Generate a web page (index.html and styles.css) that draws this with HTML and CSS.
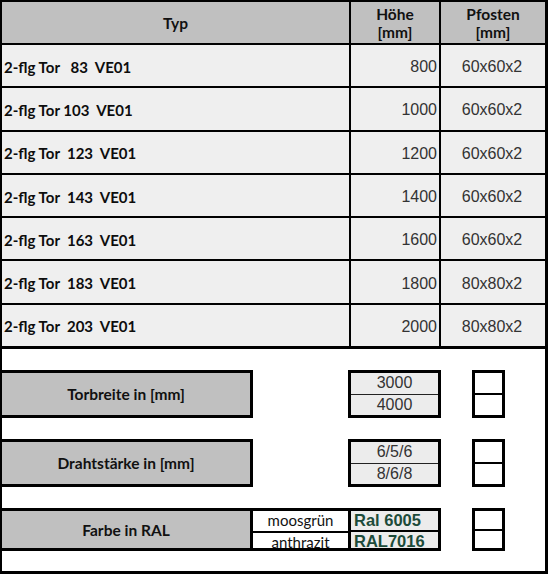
FILE: index.html
```html
<!DOCTYPE html>
<html lang="de">
<head>
<meta charset="utf-8">
<title>Tor Auswahl</title>
<link rel="stylesheet" href="styles.css">
</head>
<body>
<div class="sheet">
  <div class="grid">
    <div class="h">Typ</div>
    <div class="h">Höhe<br>[mm]</div>
    <div class="h">Pfosten<br>[mm]</div>

    <div class="c typ">2-flg Tor &nbsp;&nbsp;83 &nbsp;VE01</div><div class="c num">800</div><div class="c dim">60x60x2</div>
    <div class="c typ">2-flg Tor 103 &nbsp;VE01</div><div class="c num">1000</div><div class="c dim">60x60x2</div>
    <div class="c typ">2-flg Tor &nbsp;123 &nbsp;VE01</div><div class="c num">1200</div><div class="c dim">60x60x2</div>
    <div class="c typ">2-flg Tor &nbsp;143 &nbsp;VE01</div><div class="c num">1400</div><div class="c dim">60x60x2</div>
    <div class="c typ">2-flg Tor &nbsp;163 &nbsp;VE01</div><div class="c num">1600</div><div class="c dim">60x60x2</div>
    <div class="c typ">2-flg Tor &nbsp;183 &nbsp;VE01</div><div class="c num">1800</div><div class="c dim">80x80x2</div>
    <div class="c typ">2-flg Tor &nbsp;203 &nbsp;VE01</div><div class="c num">2000</div><div class="c dim">80x80x2</div>
  </div>

  <div class="lower">
    <div class="opt">
      <div class="label">Torbreite in [mm]</div>
      <div class="vals"><div>3000</div><div>4000</div></div>
      <div class="check"><div></div><div></div></div>
    </div>
    <div class="opt">
      <div class="label">Drahtstärke in [mm]</div>
      <div class="vals"><div>6/5/6</div><div>8/6/8</div></div>
      <div class="check"><div></div><div></div></div>
    </div>
    <div class="opt farbe">
      <div class="label">Farbe in RAL</div>
      <div class="names"><div>moosgrün</div><div>anthrazit</div></div>
      <div class="ral"><div>Ral 6005</div><div>RAL7016</div></div>
      <div class="check"><div></div><div></div></div>
    </div>
  </div>
</div>
</body>
</html>
```

FILE: styles.css
```css
* { box-sizing: border-box; }
html, body { margin: 0; padding: 0; background: #fff; }
body { font-family: Lato, "Liberation Sans", sans-serif; color: #111; }

.sheet {
  width: 548px;
  border-left: 2px solid #000;
  border-top: 2px solid #000;
  border-right: 3px solid #000;
  border-bottom: 3px solid #000;
  background: #fff;
}

.grid {
  display: grid;
  grid-template-columns: 347px 88px 104px;
  grid-template-rows: 41px;
  grid-auto-rows: 41.3px;
  gap: 2px;
  background: #000;
  border-bottom: 3px solid #000;
}

.h {
  background: #c0c0c0;
  display: flex;
  align-items: center;
  justify-content: center;
  text-align: center;
  font-weight: 700;
  font-size: 15.5px;
  line-height: 18px;
  color: #111;
}

.c {
  background: #efefef;
  display: flex;
  align-items: center;
}
.typ {
  font-weight: 700;
  font-size: 15px;
  padding-left: 2px;
  padding-top: 2px;
  color: #0d0d0d;
}
.num, .dim {
  font-family: "Liberation Sans", Arial, sans-serif;
  font-size: 16px;
  color: #333;
  padding-top: 3px;
}
.num { justify-content: flex-end; padding-right: 2px; }
.dim { justify-content: center; padding-right: 2px; }

.lower {
  display: flex;
  flex-direction: column;
  gap: 21px;
  padding: 21px 0 20px;
}
.opt {
  display: flex;
  height: 48px;
}
.opt.farbe { height: 43px; }

.label {
  width: 251px;
  border: 3px solid #000;
  border-left: 0;
  background: #c0c0c0;
  display: flex;
  align-items: center;
  justify-content: center;
  font-weight: 700;
  font-size: 15.5px;
  color: #111;
}

.vals {
  margin-left: 95px;
  width: 93px;
  border: 3px solid #000;
  background: #ececec;
  display: flex;
  flex-direction: column;
}
.vals > div, .ral > div, .names > div {
  flex: 1;
  display: flex;
  align-items: center;
  justify-content: center;
}
.vals > div {
  font-family: "Liberation Sans", Arial, sans-serif;
  font-size: 16px;
  color: #333;
}
.vals > div + div { border-top: 1px solid #222; }

.check {
  margin-left: 31px;
  width: 33px;
  border: 3px solid #000;
  background: #fff;
  display: flex;
  flex-direction: column;
}
.check > div { flex: 1; }
.check > div + div { border-top: 2px solid #000; }

.names {
  width: 95px;
  border-top: 3px solid #000;
  border-bottom: 3px solid #000;
  background: #fff;
  display: flex;
  flex-direction: column;
}
.names > div {
  font-size: 15px;
  color: #111;
  padding-bottom: 2px;
}
.names > div + div { border-top: 2px solid #000; }

.ral {
  width: 93px;
  border: 3px solid #000;
  background: #ececec;
  display: flex;
  flex-direction: column;
}
.ral > div {
  justify-content: flex-start;
  padding-left: 3px;
  font-family: "Liberation Sans", Arial, sans-serif;
  font-weight: 700;
  font-size: 16.5px;
  color: #1d4b3a;
}
.ral > div + div { border-top: 2px solid #000; }
```
